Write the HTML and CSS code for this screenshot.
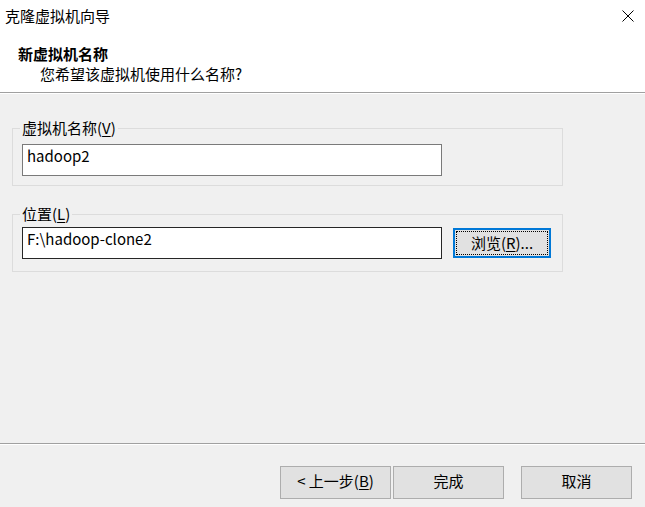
FILE: index.html
```html
<!DOCTYPE html>
<html lang="zh-CN">
<head>
  <meta charset="UTF-8">
  <meta name="viewport" content="width=device-width, initial-scale=1.0">
  <title>克隆虚拟机向导</title>
  <link rel="stylesheet" href="styles.css">
</head>
<body>
  <div class="header">
    <div class="title-bar">
      <span class="title">克隆虚拟机向导</span>
      <svg class="close" width="12" height="12" viewBox="0 0 12 12">
        <path d="M0.5 0.5 L11.5 11.5 M11.5 0.5 L0.5 11.5" stroke="#000" stroke-width="1" fill="none"/>
      </svg>
    </div>
    <div class="heading">
      <h1>新虚拟机名称</h1>
      <p>您希望该虚拟机使用什么名称?</p>
    </div>
  </div>

  <div class="content">
    <div class="group group-name">
      <span class="group-label">虚拟机名称(<u>V</u>)</span>
      <input class="text-field" type="text" value="hadoop2">
    </div>
    <div class="group group-location">
      <span class="group-label">位置(<u>L</u>)</span>
      <div class="field-row">
        <input class="text-field dark" type="text" value="F:\hadoop-clone2">
        <button class="btn browse"><span class="focus">浏览(<u>R</u>)...</span></button>
      </div>
    </div>
  </div>

  <div class="footer">
    <button class="btn">&lt; 上一步(<u>B</u>)</button>
    <button class="btn">完成</button>
    <button class="btn cancel">取消</button>
  </div>
</body>
</html>
```

FILE: styles.css
```css
body {
  margin: 0;
  width: 645px;
  height: 507px;
  display: flex;
  flex-direction: column;
  background: #f0f0f0;
  font-family: "Noto Sans CJK SC", "Noto Sans", sans-serif;
  font-size: 15px;
  color: #000;
  overflow: hidden;
}
u {
  text-decoration: underline;
  text-underline-offset: 2px;
}
.header {
  background: #fff;
  border-bottom: 1px solid #a0a0a0;
}
.title-bar {
  height: 31px;
  display: flex;
  align-items: center;
  justify-content: space-between;
  padding: 0 11px 0 5px;
}
.title {
  line-height: 20px;
}
.heading {
  padding: 13px 0 8px 18px;
}
.heading h1 {
  margin: 0;
  font-size: 15px;
  font-weight: bold;
  line-height: 20px;
}
.heading p {
  margin: 0 0 0 22px;
  line-height: 20px;
}
.content {
  flex: 1;
  box-shadow: inset 0 1px #fff;
  padding: 35px 0 0 12px;
}
.group {
  width: 549px;
  border: 1px solid #dcdcdc;
}
.group-label {
  display: block;
  width: max-content;
  margin: -11px 0 0 7px;
  padding: 0 2px;
  background: #f0f0f0;
  line-height: 20px;
}
.group-name {
  padding-bottom: 9px;
}
.group-name .text-field {
  display: block;
  margin: 6px 0 0 9px;
}
.group-location {
  margin-top: 28px;
  padding-bottom: 12px;
}
.field-row {
  display: flex;
  align-items: center;
  gap: 11px;
  margin: 3px 0 0 9px;
}
.text-field {
  box-sizing: border-box;
  width: 420px;
  height: 32px;
  padding: 0 4px 10px;
  border: 1px solid #7a7a7a;
  background: #fff;
  font: inherit;
  line-height: 20px;
  color: #000;
  outline: none;
}
.text-field.dark {
  border-color: #262626;
}
.btn {
  box-sizing: border-box;
  width: 111px;
  height: 33px;
  padding: 0 0 3px;
  border: 1px solid #adadad;
  background: #e1e1e1;
  font: inherit;
  line-height: 20px;
  color: #000;
}
.browse {
  width: 98px;
  height: 30px;
  border: 2px solid #0078d7;
  padding: 1px;
}
.browse .focus {
  display: flex;
  align-items: center;
  justify-content: center;
  height: 100%;
  box-sizing: border-box;
  border: 1px dotted #000;
  padding-bottom: 1px;
}
.footer {
  height: 64px;
  box-sizing: border-box;
  border-top: 1px solid #a0a0a0;
  box-shadow: inset 0 1px #fff;
  padding: 22px 13px 0 0;
  display: flex;
  justify-content: flex-end;
  align-items: flex-start;
  gap: 2px;
}
.footer .cancel {
  margin-left: 15px;
}
```
